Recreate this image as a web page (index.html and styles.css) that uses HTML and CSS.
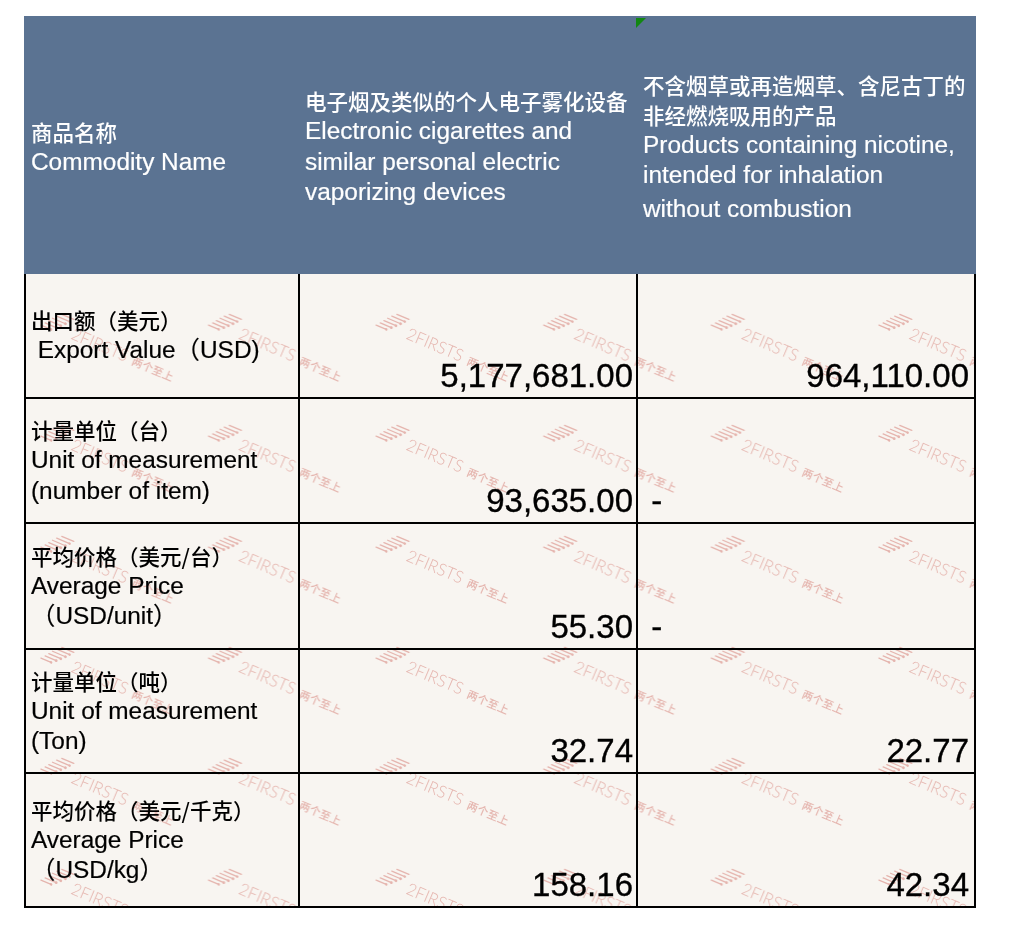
FILE: index.html
```html
<!DOCTYPE html>
<html lang="zh-CN">
<head>
<meta charset="utf-8">
<title>Export data</title>
<link rel="stylesheet" href="styles.css">
</head>
<body>
<div class="sheet">
  <div class="header">
    <div class="hcell">
      <div class="cn">商品名称</div>
      <div class="en">Commodity Name</div>
    </div>
    <div class="hcell">
      <div class="cn">电子烟及类似的个人电子雾化设备</div>
      <div class="en">Electronic cigarettes and</div>
      <div class="en">similar personal electric</div>
      <div class="en">vaporizing devices</div>
    </div>
    <div class="hcell flagged">
      <div class="cn">不含烟草或再造烟草、含尼古丁的</div>
      <div class="cn">非经燃烧吸用的产品</div>
      <div class="en">Products containing nicotine,</div>
      <div class="en">intended for inhalation</div>
      <div class="en last">without combustion</div>
    </div>
  </div>

  <div class="grid">
    <div class="cell label">
      <div class="cn">出口额（美元）</div>
      <div class="en">&nbsp;Export Value（USD)</div>
    </div>
    <div class="cell num">5,177,681.00</div>
    <div class="cell num right">964,110.00</div>

    <div class="cell label">
      <div class="cn">计量单位（台）</div>
      <div class="en">Unit of measurement</div>
      <div class="en">(number of item)</div>
    </div>
    <div class="cell num">93,635.00</div>
    <div class="cell dash">&nbsp;-</div>

    <div class="cell label">
      <div class="cn">平均价格（美元/台）</div>
      <div class="en">Average Price</div>
      <div class="en">（USD/unit）</div>
    </div>
    <div class="cell num">55.30</div>
    <div class="cell dash">&nbsp;-</div>

    <div class="cell label">
      <div class="cn">计量单位（吨）</div>
      <div class="en">Unit of measurement</div>
      <div class="en">(Ton)</div>
    </div>
    <div class="cell num">32.74</div>
    <div class="cell num right">22.77</div>

    <div class="cell label">
      <div class="cn">平均价格（美元/千克）</div>
      <div class="en">Average Price</div>
      <div class="en">（USD/kg）</div>
    </div>
    <div class="cell num">158.16</div>
    <div class="cell num right">42.34</div>
  </div>

  <div class="watermark" aria-hidden="true">
    <svg width="952" height="650" viewBox="0 0 952 650" xmlns="http://www.w3.org/2000/svg">
      <defs>
        <pattern id="wm" patternUnits="userSpaceOnUse" x="12" y="34" width="167.6" height="111">
          <g transform="translate(4,4)" class="wm-ink">
            <g transform="translate(30,26.5) rotate(23)">
              <g class="wm-lines">
                <line x1="-32" y1="-1" x2="-21" y2="-1"/>
                <line x1="-29" y1="-4.6" x2="-17" y2="-4.6"/>
                <line x1="-26.5" y1="-8.2" x2="-13.5" y2="-8.2"/>
                <line x1="-24" y1="-11.8" x2="-10" y2="-11.8"/>
                <line x1="-21" y1="-15.4" x2="-7" y2="-15.4"/>
                <line x1="-17" y1="-19" x2="-4" y2="-19"/>
              </g>
              <circle cx="-21" cy="-1" r="1.3"/>
              <circle cx="-17" cy="-4.6" r="1.4"/>
              <circle cx="-13.5" cy="-8.2" r="1.4"/>
              <circle cx="-10" cy="-11.8" r="1.4"/>
              <circle cx="-7" cy="-15.4" r="1.3"/>
              <text class="wm-brand" x="0" y="0" textLength="60" lengthAdjust="spacingAndGlyphs">2FIRSTS</text>
              <text class="wm-cn" x="66" y="0" textLength="44" lengthAdjust="spacingAndGlyphs">两个至上</text>
            </g>
          </g>
        </pattern>
      </defs>
      <rect x="0" y="0" width="952" height="650" fill="url(#wm)"/>
    </svg>
  </div>
</div>
</body>
</html>
```

FILE: styles.css
```css
html, body {
  margin: 0;
  padding: 0;
  background: #ffffff;
}

body {
  font-family: "Liberation Sans", "Noto Sans CJK SC", Arial, sans-serif;
  color: #000000;
}

.sheet {
  position: relative;
  width: 952px;
  margin: 16px 0 0 24px;
}

/* ---------- header ---------- */
.header {
  display: grid;
  grid-template-columns: 272px 336px 336px;
  column-gap: 2px;
  padding: 0 2px;
  height: 258px;
  background: #5b7392;
  color: #ffffff;
}

.hcell {
  position: relative;
  display: flex;
  flex-direction: column;
  justify-content: center;
  padding: 4px 0 0 5px;
}

.hcell.flagged::before {
  content: "";
  position: absolute;
  left: -2px;
  top: 2px;
  width: 0;
  height: 0;
  border-top: 10px solid #128712;
  border-right: 10px solid transparent;
}

.cn {
  font-family: "Noto Sans CJK SC", "Liberation Sans", sans-serif;
  font-size: 21.5px;
  font-weight: 500;
  line-height: 30px;
  white-space: nowrap;
}

.en {
  font-family: "Liberation Sans", "Noto Sans CJK SC", sans-serif;
  font-size: 24.4px;
  line-height: 30.5px;
  white-space: nowrap;
  -webkit-text-stroke: 0.2px currentColor;
}

.en.last {
  margin-top: 3px;
}

/* ---------- body grid ---------- */
.grid {
  display: grid;
  grid-template-columns: 272px 336px 336px;
  grid-template-rows: 123px 123px 124px 122px 132px;
  gap: 2px;
  padding: 0 2px 2px 2px;
  background: #000000;
}

.cell {
  background: #f8f5f1;
  display: flex;
  flex-direction: column;
  min-width: 0;
}

.label {
  justify-content: center;
  padding-left: 5px;
}

.num,
.dash {
  justify-content: flex-end;
  font-family: "Liberation Sans", sans-serif;
  font-size: 33px;
  line-height: 33px;
  padding-bottom: 5px;
  white-space: nowrap;
  -webkit-text-stroke: 0.35px #000;
}

.num {
  align-items: flex-end;
  padding-right: 3px;
}

.num.right {
  padding-right: 5px;
}

.dash {
  align-items: flex-start;
  padding-left: 4px;
}

/* ---------- watermark overlay ---------- */
.watermark {
  position: absolute;
  left: 0;
  top: 258px;
  width: 952px;
  height: 650px;
  overflow: hidden;
  pointer-events: none;
  mix-blend-mode: multiply;
}

.watermark svg {
  display: block;
}

.wm-ink {
  fill: #ecbcb8;
}

.wm-lines line {
  stroke: #ecbcb8;
  stroke-width: 1.3;
  stroke-linecap: round;
}

.wm-brand {
  font-family: Lato, "Liberation Sans", sans-serif;
  font-weight: 300;
  font-size: 17px;
}

.wm-cn {
  font-family: "Noto Sans CJK SC", sans-serif;
  font-weight: 500;
  font-size: 11px;
}
```
